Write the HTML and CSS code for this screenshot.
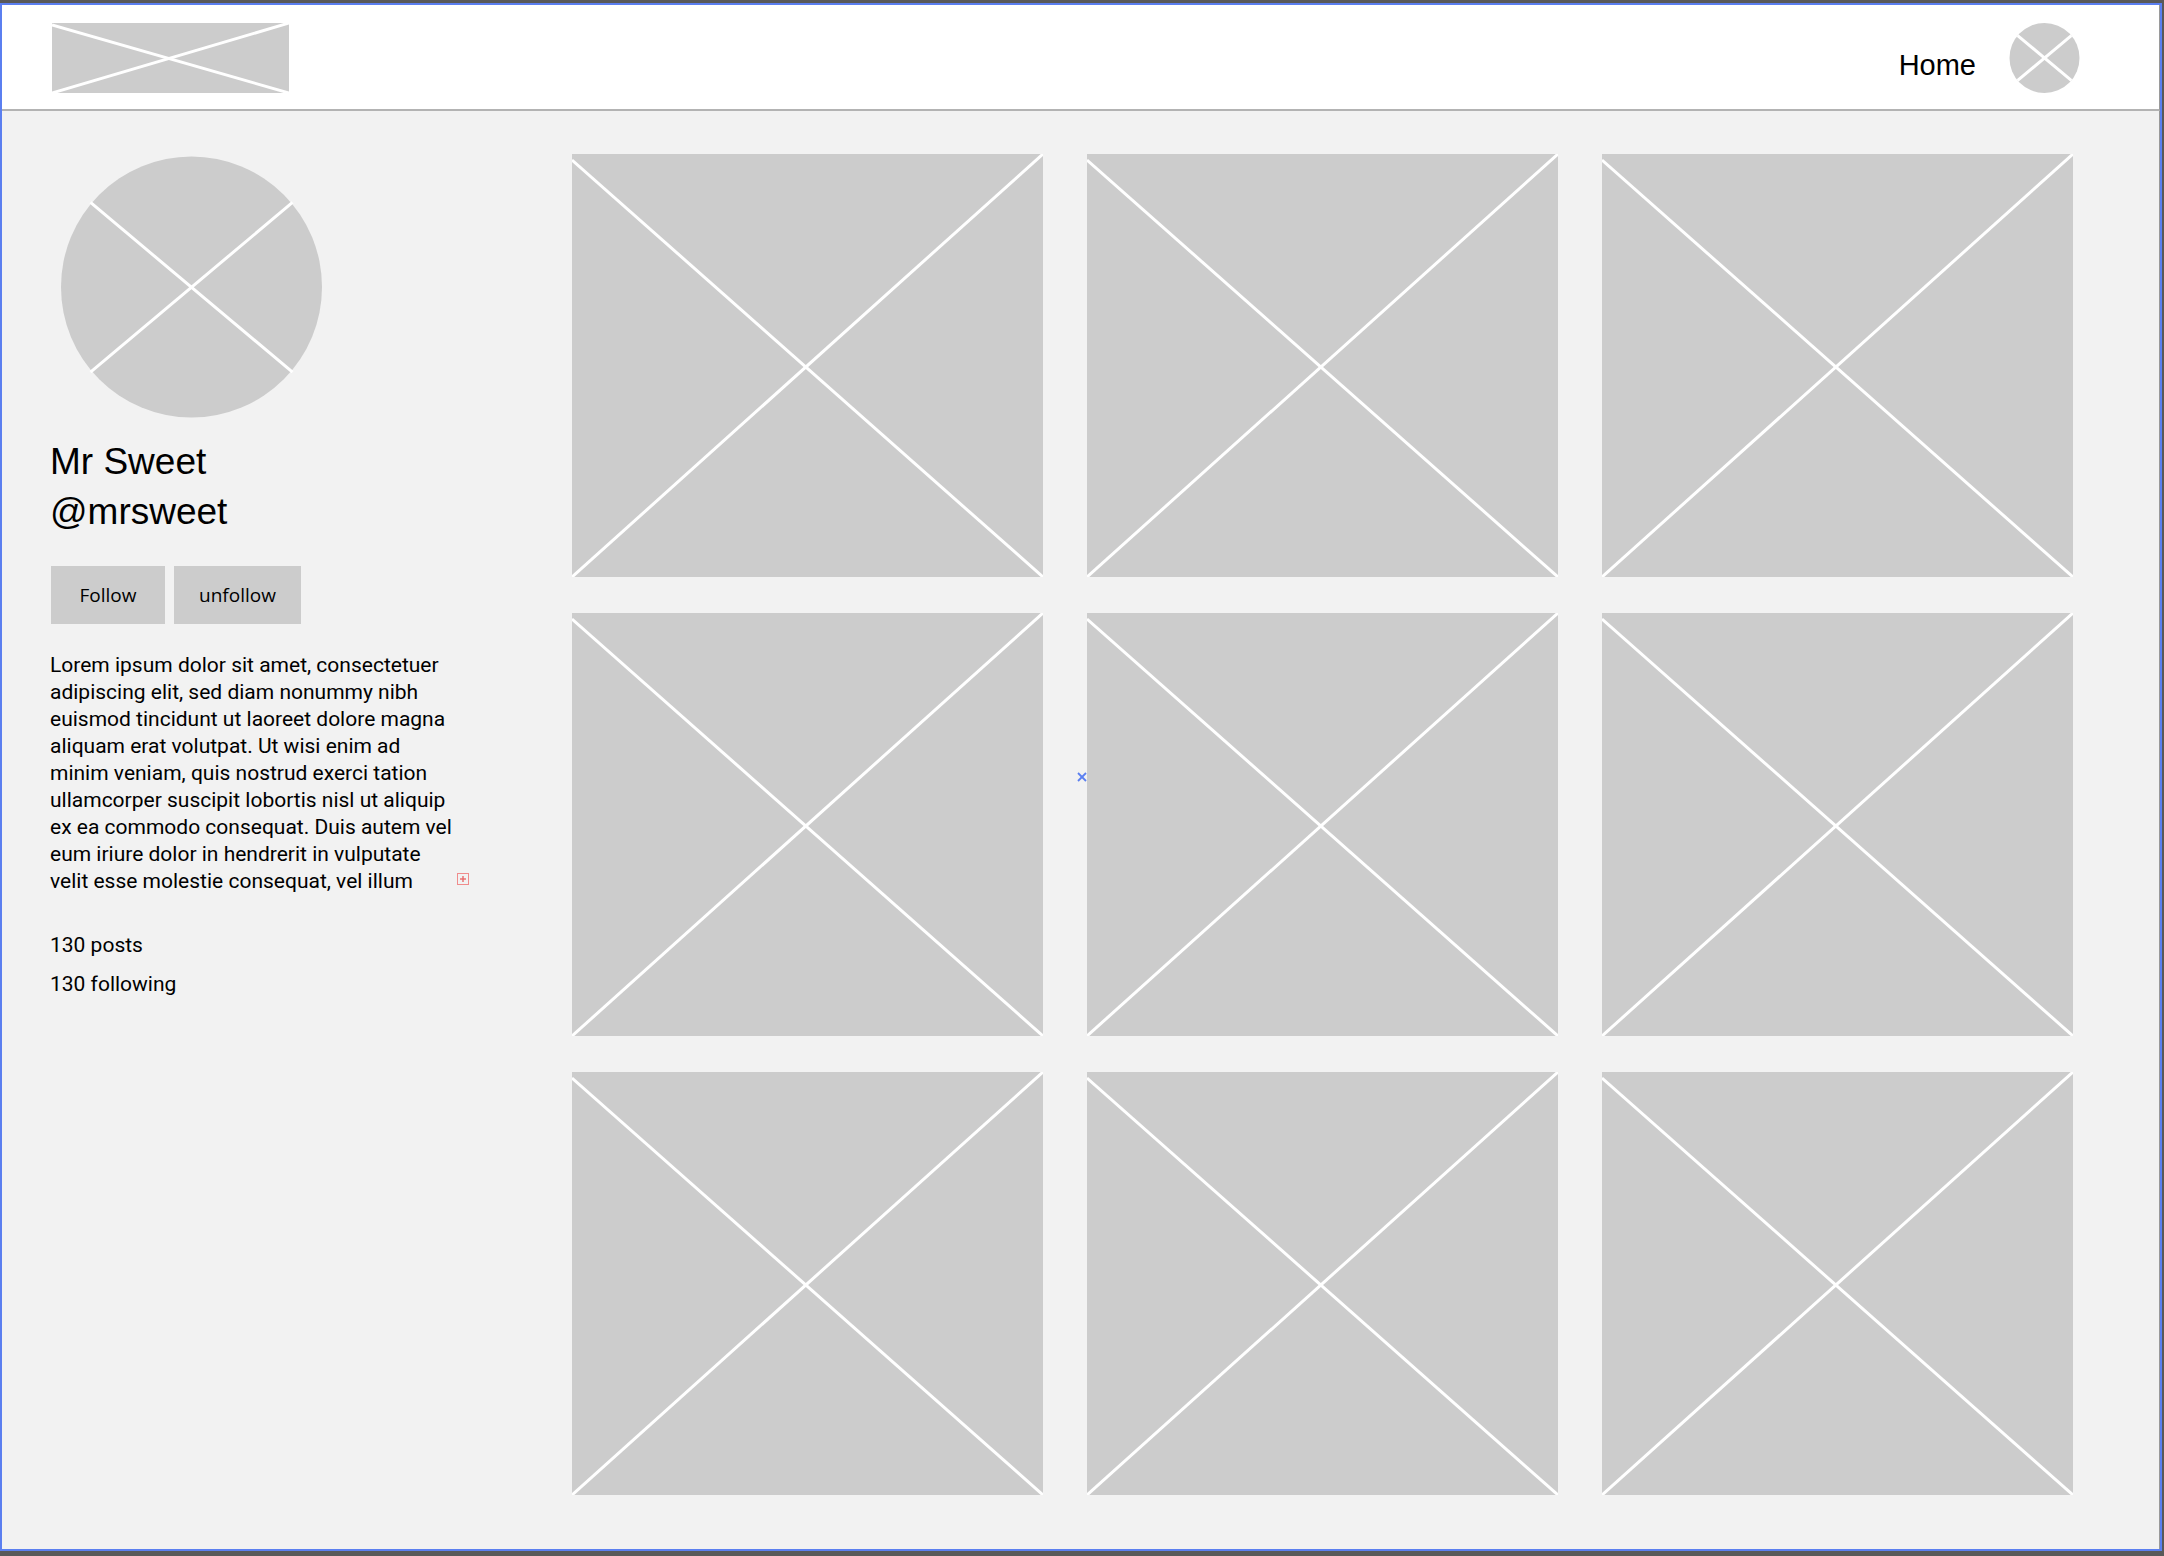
FILE: index.html
```html
<!DOCTYPE html>
<html lang="en">
<head>
    <meta charset="UTF-8">
    <meta name="viewport" content="width=device-width, initial-scale=1.0">
    <title>Mr Sweet - Profile</title>
    <link rel="stylesheet" href="styles.css">
</head>
<body>
    <div class="window">
        <header class="topbar">
            <div class="logo">
                <svg viewBox="0 0 237 70" preserveAspectRatio="none">
                    <rect width="237" height="70" fill="#cccccc"/>
                    <line x1="0" y1="2" x2="237" y2="70"/>
                    <line x1="0" y1="70" x2="237" y2="0"/>
                </svg>
            </div>
            <nav class="nav">
                <a class="nav-link" href="#">Home</a>
                <div class="nav-avatar">
                    <svg viewBox="0 0 100 100">
                        <circle cx="50" cy="50" r="50" fill="#cccccc"/>
                        <line x1="11.7" y1="17.9" x2="88.3" y2="82.1"/>
                        <line x1="11.7" y1="82.1" x2="88.3" y2="17.9"/>
                    </svg>
                </div>
            </nav>
        </header>

        <main class="content">
            <aside class="profile">
                <div class="avatar">
                    <svg viewBox="0 0 100 100">
                        <circle cx="50" cy="50" r="50" fill="#cccccc"/>
                        <line x1="11.3" y1="17.6" x2="88.7" y2="82.6"/>
                        <line x1="11.3" y1="82.6" x2="88.7" y2="17.6"/>
                    </svg>
                </div>
                <div class="name">Mr Sweet</div>
                <div class="handle">@mrsweet</div>

                <div class="actions">
                    <button type="button" class="btn btn-follow">Follow</button>
                    <button type="button" class="btn btn-unfollow">unfollow</button>
                </div>

                <p class="bio">Lorem ipsum dolor sit amet, consectetuer adipiscing elit, sed diam nonummy nibh euismod tincidunt ut laoreet dolore magna aliquam erat volutpat. Ut wisi enim ad minim veniam, quis nostrud exerci tation ullamcorper suscipit lobortis nisl ut aliquip ex ea commodo consequat. Duis autem vel eum iriure dolor in hendrerit in vulputate velit esse molestie consequat, vel illum
                    <span class="more-mark">
                        <svg viewBox="0 0 12 12">
                            <rect x="0.5" y="0.5" width="11" height="11"/>
                            <line x1="6" y1="3" x2="6" y2="9"/>
                            <line x1="3" y1="6" x2="9" y2="6"/>
                        </svg>
                    </span>
                </p>

                <ul class="stats">
                    <li>130 posts</li>
                    <li>130 following</li>
                </ul>
            </aside>

            <section class="posts">
                <div class="post"><svg viewBox="0 0 471 423" preserveAspectRatio="none"><rect width="471" height="423"/><line x1="0" y1="6" x2="471" y2="423"/><line x1="0" y1="423" x2="471" y2="0"/></svg></div>
                <div class="post"><svg viewBox="0 0 471 423" preserveAspectRatio="none"><rect width="471" height="423"/><line x1="0" y1="6" x2="471" y2="423"/><line x1="0" y1="423" x2="471" y2="0"/></svg></div>
                <div class="post"><svg viewBox="0 0 471 423" preserveAspectRatio="none"><rect width="471" height="423"/><line x1="0" y1="6" x2="471" y2="423"/><line x1="0" y1="423" x2="471" y2="0"/></svg></div>
                <div class="post"><svg viewBox="0 0 471 423" preserveAspectRatio="none"><rect width="471" height="423"/><line x1="0" y1="6" x2="471" y2="423"/><line x1="0" y1="423" x2="471" y2="0"/></svg></div>
                <div class="post"><svg viewBox="0 0 471 423" preserveAspectRatio="none"><rect width="471" height="423"/><line x1="0" y1="6" x2="471" y2="423"/><line x1="0" y1="423" x2="471" y2="0"/></svg></div>
                <div class="post"><svg viewBox="0 0 471 423" preserveAspectRatio="none"><rect width="471" height="423"/><line x1="0" y1="6" x2="471" y2="423"/><line x1="0" y1="423" x2="471" y2="0"/></svg></div>
                <div class="post"><svg viewBox="0 0 471 423" preserveAspectRatio="none"><rect width="471" height="423"/><line x1="0" y1="6" x2="471" y2="423"/><line x1="0" y1="423" x2="471" y2="0"/></svg></div>
                <div class="post"><svg viewBox="0 0 471 423" preserveAspectRatio="none"><rect width="471" height="423"/><line x1="0" y1="6" x2="471" y2="423"/><line x1="0" y1="423" x2="471" y2="0"/></svg></div>
                <div class="post"><svg viewBox="0 0 471 423" preserveAspectRatio="none"><rect width="471" height="423"/><line x1="0" y1="6" x2="471" y2="423"/><line x1="0" y1="423" x2="471" y2="0"/></svg></div>

                <span class="marker">
                    <svg viewBox="0 0 10 10">
                        <line x1="1" y1="1" x2="9" y2="9"/>
                        <line x1="1" y1="9" x2="9" y2="1"/>
                    </svg>
                </span>
            </section>
        </main>
    </div>
</body>
</html>
```

FILE: styles.css
```css
* {
    box-sizing: border-box;
}
body {
    margin: 0;
    height: 1556px;
    background-color: #595959;
    font-family: "Liberation Sans", Arial, sans-serif;
    color: #000;
    overflow: hidden;
}
.window {
    margin-top: 3px;
    width: 2162px;
    height: 1548px;
    border: 2px solid #5b7ff0;
    display: flex;
    flex-direction: column;
    background-color: #f2f2f2;
}

/* top bar */
.topbar {
    height: 106px;
    display: flex;
    align-items: center;
    justify-content: space-between;
    padding: 2px 79px 0 50px;
    background-color: #fff;
    border-bottom: 2px solid #b3b3b3;
    border-right: 1px solid #9a9a9a;
}
.logo {
    width: 237px;
    height: 70px;
}
.logo svg,
.nav-avatar svg,
.avatar svg,
.post svg {
    display: block;
    width: 100%;
    height: 100%;
}
.logo line,
.nav-avatar line,
.avatar line,
.post line {
    stroke: #fff;
    stroke-width: 3;
    vector-effect: non-scaling-stroke;
}
.nav {
    display: flex;
    align-items: center;
    gap: 33px;
}
.nav-link {
    padding-top: 14px;
    font-size: 29px;
    color: #000;
    text-decoration: none;
}
.nav-avatar {
    width: 71px;
    height: 70px;
}

/* main area */
.content {
    flex: 1;
    display: flex;
    padding-top: 43px;
    border-right: 1px solid #9a9a9a;
}
.profile {
    width: 570px;
    padding-left: 48px;
}
.avatar {
    width: 261px;
    height: 262px;
    margin: 2px 0 0 11px;
}
.name,
.handle {
    font-size: 37px;
    line-height: 50px;
}
.name {
    margin-top: 19px;
}
.actions {
    display: flex;
    gap: 9px;
    margin-top: 29px;
    padding-left: 1px;
}
.btn {
    height: 58px;
    padding: 0;
    border: none;
    background-color: #cccccc;
    font-family: "Open Sans", sans-serif;
    font-size: 19px;
    color: #000;
    cursor: pointer;
}
.btn-follow {
    width: 114px;
}
.btn-unfollow {
    width: 127px;
}
.bio {
    position: relative;
    width: 412px;
    margin: 28px 0 0;
    font-family: Roboto, sans-serif;
    font-size: 21px;
    line-height: 27px;
}
.more-mark {
    position: absolute;
    left: 407px;
    top: 221px;
    width: 12px;
    height: 12px;
}
.more-mark svg {
    display: block;
    width: 12px;
    height: 12px;
}
.more-mark rect {
    fill: none;
    stroke: #f08c8c;
    stroke-width: 1;
}
.more-mark line {
    stroke: #e86a6a;
    stroke-width: 1.4;
}
.stats {
    list-style: none;
    margin: 31px 0 0;
    padding: 0;
    font-family: Roboto, sans-serif;
    font-size: 21px;
    line-height: 39px;
}

/* posts grid */
.posts {
    position: relative;
    display: grid;
    grid-template-columns: repeat(3, 471px);
    grid-auto-rows: 423px;
    column-gap: 44px;
    row-gap: 36px;
    align-content: start;
}
.post rect {
    fill: #cccccc;
}
.marker {
    position: absolute;
    left: 505px;
    top: 618px;
    width: 10px;
    height: 10px;
}
.marker svg {
    display: block;
    width: 10px;
    height: 10px;
}
.marker line {
    stroke: #5b7ff0;
    stroke-width: 1.8;
}
```
